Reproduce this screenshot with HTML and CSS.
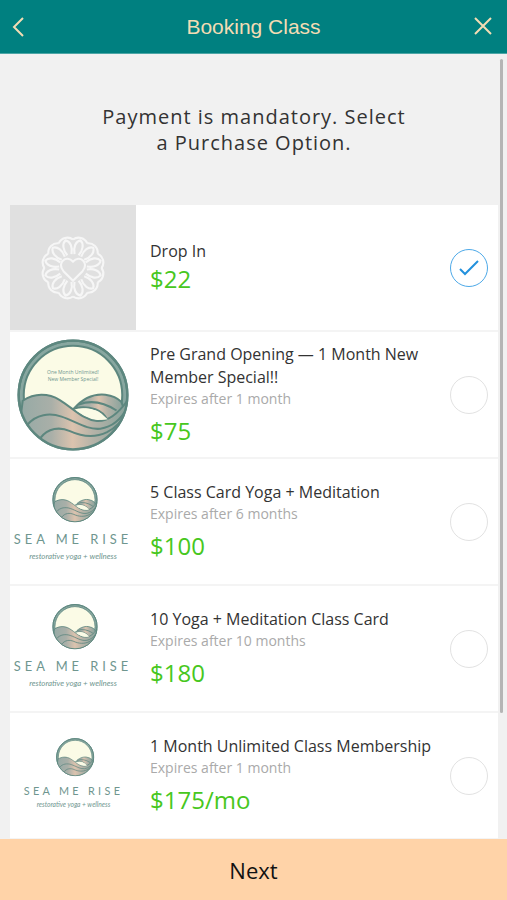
FILE: index.html
```html
<!DOCTYPE html>
<html lang="en">
<head>
<meta charset="utf-8">
<meta name="viewport" content="width=device-width, initial-scale=1">
<title>Booking Class</title>
<link rel="stylesheet" href="styles.css">
</head>
<body>
<svg class="defs" aria-hidden="true">
  <defs>
    <linearGradient id="sea" x1="0" y1="0" x2="1" y2="0">
      <stop offset="0" stop-color="#93a9a5"/>
      <stop offset="0.3" stop-color="#a9afa8"/>
      <stop offset="0.48" stop-color="#dcc3ae"/>
      <stop offset="0.65" stop-color="#b5b3a8"/>
      <stop offset="1" stop-color="#7f9f99"/>
    </linearGradient>
    <clipPath id="rim"><circle cx="219" cy="188" r="163"/></clipPath>
    <symbol id="emblem" viewBox="53 22 332 332">
      <circle cx="219" cy="188" r="161" fill="#88a7a0" stroke="#5d877f" stroke-width="7"/>
      <circle cx="219" cy="188" r="146" fill="#fbfbe6" stroke="#5d877f" stroke-width="6"/>
      <g clip-path="url(#rim)" stroke="#5d877f" stroke-width="6" fill="url(#sea)">
        <path d="M222 228C250 196 285 184 315 187Q345 191 362 208L375 240L320 262Q312 240 285 230Q252 220 222 228Z"/>
        <path d="M236 216Q290 196 348 234" fill="none"/>
        <path d="M70 205C105 182 145 182 180 203C220 228 250 262 290 265C325 267 355 240 380 205L400 360H50Z"/>
        <path d="M84 276C110 245 150 240 185 252C225 265 260 292 300 288C335 283 362 260 380 225" fill="none"/>
        <path d="M122 316C145 285 180 282 210 295C245 311 285 315 320 298C345 285 365 265 376 240" fill="none"/>
      </g>
      <path d="M228 234Q275 213 322 260Q275 268 228 234Z" fill="#fbfbe6"/>
      <circle cx="219" cy="188" r="161" fill="none" stroke="#5d877f" stroke-width="7"/>
    </symbol>
    <symbol id="brand" viewBox="0 0 126 126">
      <use href="#emblem" x="42" y="18" width="46" height="46"/>
      <text class="brand-name" x="63" y="86">SEA ME RISE</text>
      <text class="brand-tag" x="63" y="101">restorative yoga + wellness</text>
    </symbol>
    <g id="petal">
      <path d="M-7 -26A9 9 0 0 1 7 -26"/>
      <path d="M-2 -13C-5 -19 -4 -25 0 -27C4 -25 5 -19 2 -13"/>
    </g>
  </defs>
</svg>

<header class="topbar">
  <button class="icon-button" type="button" aria-label="Back">
    <svg width="14" height="20" viewBox="0 0 14 20"><path d="M11 1L2 10L11 19"/></svg>
  </button>
  <h1>Booking Class</h1>
  <button class="icon-button close" type="button" aria-label="Close">
    <svg width="20" height="20" viewBox="0 0 20 20"><path d="M2 1L18 17M18 1L2 17"/></svg>
  </button>
</header>

<main>
  <p class="notice">Payment is mandatory. Select a Purchase Option.</p>
  <form id="options" class="options">
    <label class="option">
      <span class="thumb placeholder">
        <svg class="mandala" viewBox="-34 -34 68 68" aria-hidden="true">
          <use href="#petal" transform="rotate(15)"/><use href="#petal" transform="rotate(45)"/>
          <use href="#petal" transform="rotate(75)"/><use href="#petal" transform="rotate(105)"/>
          <use href="#petal" transform="rotate(135)"/><use href="#petal" transform="rotate(165)"/>
          <use href="#petal" transform="rotate(195)"/><use href="#petal" transform="rotate(225)"/>
          <use href="#petal" transform="rotate(255)"/><use href="#petal" transform="rotate(285)"/>
          <use href="#petal" transform="rotate(315)"/><use href="#petal" transform="rotate(345)"/>
          <path d="M0 12L-9 3C-16 -5 -6 -13 0 -6C6 -13 16 -5 9 3Z"/>
        </svg>
      </span>
      <span class="details"><span class="name">Drop In</span><span class="price flush">$22</span></span>
      <span class="pick"><input type="radio" name="option" checked><svg viewBox="0 0 38 38" aria-hidden="true"><path d="M10 20L15 25L28 12"/></svg></span>
    </label>
    <label class="option">
      <span class="thumb">
        <svg class="large-emblem" viewBox="0 0 112 112" aria-hidden="true">
          <use href="#emblem" width="112" height="112"/>
          <text class="promo" x="56" y="35">One Month Unlimited!</text>
          <text class="promo" x="56" y="42">New Member Special!</text>
        </svg>
      </span>
      <span class="details"><span class="name">Pre Grand Opening — 1 Month New Member Special!!</span><span class="expiry">Expires after 1 month</span><span class="price">$75</span></span>
      <span class="pick"><input type="radio" name="option"></span>
    </label>
    <label class="option">
      <span class="thumb"><svg class="brand" aria-hidden="true"><use href="#brand"/></svg></span>
      <span class="details"><span class="name">5 Class Card Yoga + Meditation</span><span class="expiry">Expires after 6 months</span><span class="price">$100</span></span>
      <span class="pick"><input type="radio" name="option"></span>
    </label>
    <label class="option">
      <span class="thumb"><svg class="brand" aria-hidden="true"><use href="#brand"/></svg></span>
      <span class="details"><span class="name">10 Yoga + Meditation Class Card</span><span class="expiry">Expires after 10 months</span><span class="price">$180</span></span>
      <span class="pick"><input type="radio" name="option"></span>
    </label>
    <label class="option">
      <span class="thumb"><svg class="brand small" aria-hidden="true"><use href="#brand"/></svg></span>
      <span class="details"><span class="name">1 Month Unlimited Class Membership</span><span class="expiry">Expires after 1 month</span><span class="price">$175/mo</span></span>
      <span class="pick"><input type="radio" name="option"></span>
    </label>
  </form>
  <span class="scroll-thumb" aria-hidden="true"></span>
</main>

<button class="next" type="submit" form="options">Next</button>
</body>
</html>
```

FILE: styles.css
```css
* {
  box-sizing: border-box;
}

body {
  margin: 0;
  height: 100vh;
  display: flex;
  flex-direction: column;
  background: #f1f1f1;
  color: #333;
  font-family: "Open Sans", "Noto Sans", sans-serif;
}

.defs {
  position: absolute;
  width: 0;
  height: 0;
}

.topbar {
  flex: none;
  display: flex;
  align-items: center;
  justify-content: space-between;
  height: 54px;
  padding: 0 8px;
  background: #008080;
  border-bottom: 1px solid #4da6a6;
  color: #f3dcb4;
}

.topbar h1 {
  margin: 0;
  font: 400 21px "Liberation Sans", Arial, sans-serif;
}

.icon-button {
  display: grid;
  place-items: center;
  width: 32px;
  height: 40px;
  padding: 0;
  border: 0;
  background: none;
  color: inherit;
}

.icon-button svg {
  fill: none;
  stroke: currentColor;
  stroke-width: 2;
}

.icon-button:first-child {
  justify-items: start;
  padding-left: 4px;
}

main {
  position: relative;
  flex: 1;
  min-height: 0;
  overflow: hidden;
  padding: 0 9px 0 10px;
}

.notice {
  max-width: 312px;
  margin: 50px auto 49px;
  font-size: 20px;
  line-height: 26px;
  letter-spacing: 1px;
  text-align: center;
}

.options {
  background: #fff;
}

.option {
  display: flex;
  align-items: stretch;
  min-height: 127px;
  border-bottom: 2px solid #f4f4f4;
}

.thumb {
  flex: none;
  display: grid;
  place-items: center;
  width: 126px;
}

.placeholder {
  background: #e0e0e0;
}

.mandala {
  width: 72px;
  height: 72px;
  fill: none;
  stroke: #f6f6f6;
  stroke-width: 2;
}

.large-emblem {
  width: 112px;
  height: 112px;
}

.brand {
  width: 126px;
  height: 125px;
}

.brand.small {
  width: 105px;
  height: 105px;
}

.brand-name,
.brand-tag,
.promo {
  text-anchor: middle;
  fill: #6f968f;
}

.brand-name {
  font: 13px Lato, sans-serif;
  letter-spacing: 4px;
}

.brand-tag {
  font: italic 8px Lato, sans-serif;
}

.promo {
  font: 5px "Open Sans", sans-serif;
}

.details {
  flex: 1;
  display: flex;
  flex-direction: column;
  justify-content: center;
  padding-left: 14px;
}

.name {
  font-size: 16px;
  line-height: 23px;
}

.expiry {
  color: #aaa;
  font-size: 14px;
  line-height: 20px;
}

.price {
  margin-top: 6px;
  color: #47c720;
  font-size: 24px;
  line-height: 32px;
}

.price.flush {
  margin-top: 0;
}

.pick {
  flex: none;
  display: grid;
  place-content: center;
  padding-right: 10px;
}

.pick > * {
  grid-area: 1 / 1;
  width: 38px;
  height: 38px;
}

.pick input {
  appearance: none;
  margin: 0;
  border: 1px solid #e2e2e2;
  border-radius: 50%;
}

.pick input:checked {
  border-color: #4da9e8;
}

.pick svg {
  fill: none;
  stroke: #2391dd;
  stroke-width: 2;
  pointer-events: none;
}

.scroll-thumb {
  position: absolute;
  top: 5px;
  right: 4px;
  width: 3px;
  height: 654px;
  border-radius: 2px;
  background: #b5b5b5;
}

.next {
  flex: none;
  height: 61px;
  border: 0;
  background: #ffd3a8;
  color: #111;
  font: 22px "Open Sans", "Noto Sans", sans-serif;
}
```
